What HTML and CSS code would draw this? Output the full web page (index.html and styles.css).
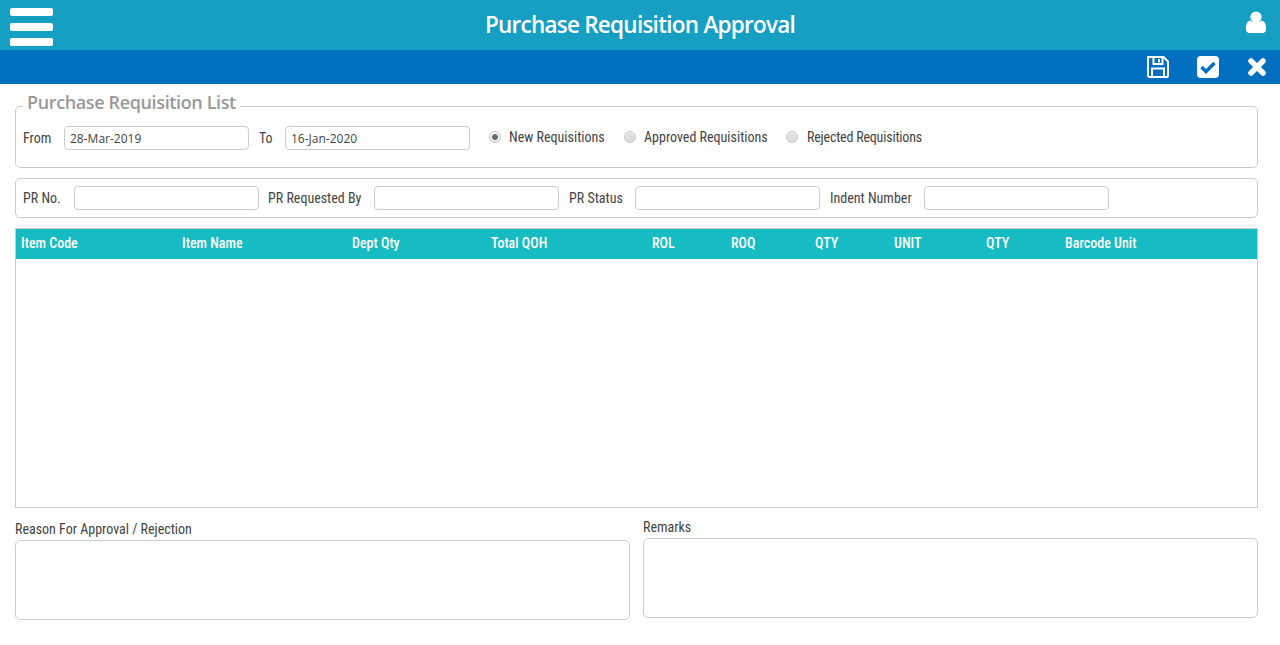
FILE: index.html
```html
<!DOCTYPE html>
<html lang="en">
<head>
    <meta charset="UTF-8">
    <meta name="viewport" content="width=device-width, initial-scale=1.0">
    <title>Purchase Requisition Approval</title>
    <link rel="stylesheet" href="styles.css">
</head>
<body>
    <header class="topbar">
        <div class="menu-btn"><span></span><span></span><span></span></div>
        <h1>Purchase Requisition Approval</h1>
        <svg class="user-icon" viewBox="0 0 20 22" width="20" height="22">
            <circle cx="10" cy="6" r="5.6" fill="#fff"/>
            <path d="M4.5 9.5C6 11.6 14 11.6 15.500 9.500C18 10 20 12 20 16.500V18.500C20 20.500 18.500 22 16.500 22H3.500C1.500 22 0 20.500 0 18.500V16.500C0 12 2 10 4.500 9.500Z" fill="#fff"/>
        </svg>
    </header>

    <div class="toolbar">
        <svg viewBox="0 0 22 22" width="22" height="22">
            <path d="M1 1H16.500L21 5.500V19.500C21 20.500 20.500 21 19.500 21H2.500C1.500 21 1 20.500 1 19.500Z" fill="none" stroke="#fff" stroke-width="2"/>
            <path d="M6.500 1.500V8H15.500V1.500M12 3V6.500M5 21V12.500H17V21" fill="none" stroke="#fff" stroke-width="2"/>
        </svg>
        <svg viewBox="0 0 22 22" width="22" height="22">
            <rect width="22" height="22" rx="4" fill="#fff"/>
            <path d="M4.500 11L9 15.500L17.500 7" fill="none" stroke="#006fbe" stroke-width="3.400"/>
        </svg>
        <svg class="close-icon" viewBox="0 0 18 18" width="18" height="18">
            <path d="M3 3L15 15M15 3L3 15" fill="none" stroke="#fff" stroke-width="5.500" stroke-linecap="round"/>
        </svg>
    </div>

    <main class="content">
        <!-- Date filter -->
        <fieldset class="box date-box">
            <legend>Purchase Requisition List</legend>
            <label class="lbl lbl-from">From</label>
            <input class="field" type="text" value="28-Mar-2019">
            <label class="lbl lbl-to">To</label>
            <input class="field" type="text" value="16-Jan-2020">
            <div class="radios">
                <label class="radio radio-new"><input type="radio" name="status" checked>New Requisitions</label>
                <label class="radio radio-approved"><input type="radio" name="status">Approved Requisitions</label>
                <label class="radio radio-rejected"><input type="radio" name="status">Rejected Requisitions</label>
            </div>
        </fieldset>

        <!-- Search -->
        <div class="box search-box">
            <label class="lbl lbl-prno">PR No.</label>
            <input class="field" type="text">
            <label class="lbl lbl-by">PR Requested By</label>
            <input class="field" type="text">
            <label class="lbl lbl-status">PR Status</label>
            <input class="field" type="text">
            <label class="lbl lbl-indent">Indent Number</label>
            <input class="field" type="text">
        </div>

        <!-- Item list -->
        <div class="items">
            <div class="items-head">
                <span>Item Code</span>
                <span>Item Name</span>
                <span>Dept Qty</span>
                <span>Total QOH</span>
                <span>ROL</span>
                <span>ROQ</span>
                <span>QTY</span>
                <span>UNIT</span>
                <span>QTY</span>
                <span>Barcode Unit</span>
            </div>
        </div>

        <div class="notes">
            <div class="note note-reason">
                <label class="lbl">Reason For Approval / Rejection</label>
                <textarea></textarea>
            </div>
            <div class="note">
                <label class="lbl">Remarks</label>
                <textarea></textarea>
            </div>
        </div>
    </main>
</body>
</html>
```
FILE: styles.css
```css
body { margin: 0; background: #fff; font-family: Roboto, "Liberation Sans", sans-serif; font-stretch: condensed; font-size: 14px; color: #444; }

.topbar { height: 50px; padding-bottom: 2px; box-sizing: border-box; background: #169fc3; display: flex; align-items: center; justify-content: center; position: relative; }
.topbar h1 { margin: 0; font-family: "Open Sans", sans-serif; font-stretch: normal; font-size: 22.5px; font-weight: 600; letter-spacing: -0.75px; color: #fff; }
.menu-btn { position: absolute; left: 10px; top: 8px; width: 43px; display: flex; flex-direction: column; gap: 7px; }
.menu-btn span { height: 8px; border-radius: 2px; background: #fff; }
.user-icon { position: absolute; right: 14px; top: 11px; }

.toolbar { height: 34px; background: #006fbe; display: flex; align-items: center; justify-content: flex-end; gap: 28px; padding-right: 14px; }
.close-icon { margin-left: 1px; }

.content { padding: 0 22px 0 15px; }

.box { border: 1px solid #ccc; border-radius: 5px; margin: 0; box-sizing: border-box; }
.lbl { white-space: nowrap; }
.field { width: 185px; height: 24px; box-sizing: border-box; border: 1px solid #ccc; border-radius: 4px; padding: 0 5px; font-family: "Open Sans", sans-serif; font-stretch: normal; font-size: 12px; color: #444; background: #fff; }

.date-box { height: 78px; margin-top: 6px; padding: 0 7px; display: flex; align-items: flex-start; min-width: 0; }
.date-box legend { margin-left: 0; padding: 0 4px 8px; font-family: "Open Sans", sans-serif; font-stretch: normal; font-size: 18px; font-weight: 600; line-height: 24px; letter-spacing: -0.37px; color: #999; }
.date-box .field { margin-top: 4px; }
.date-box .lbl-from { width: 41px; margin-top: 8px; }
.date-box .lbl-to { width: 26px; margin: 8px 0 0 10px; }

.radios { display: flex; margin: 7px 0 0 19px; }
.radio { display: flex; align-items: center; }
.radio-new { width: 135px; }
.radio-approved { width: 162px; }
.radio-rejected { letter-spacing: -0.2px; }
.radio input { appearance: none; width: 12px; height: 12px; margin: 0 8px 0 0; border: 1px solid #c4c4c4; border-radius: 50%; background: #dcdcdc; box-shadow: inset 0 1px 2px #fff; }
.radio input:checked { background: radial-gradient(circle, #666 0 2.500px, #e8e8e8 3.200px); }
.radio-rejected input { margin-right: 9px; }

.search-box { height: 40px; margin-top: 10px; padding: 0 7px; display: flex; align-items: center; }
.search-box .lbl-prno { width: 51px; }
.search-box .lbl-by { width: 106px; margin-left: 9px; }
.search-box .lbl-status { width: 66px; margin-left: 10px; }
.search-box .lbl-indent { width: 94px; margin-left: 10px; }

.items { height: 280px; margin-top: 10px; border: 1px solid #ccc; box-sizing: border-box; }
.items-head { height: 30px; padding: 0 0 2px 5px; box-sizing: border-box; background: #17bcc2; color: #fff; font-weight: 500; display: grid; grid-template-columns: 161px 170px 139px 161px 79px 84px 79px 92px 79px 1fr; align-items: center; }

.notes { display: grid; grid-template-columns: 615px 615px; column-gap: 13px; }
.note { padding-top: 9px; }
.note-reason { padding-top: 11px; }
.note .lbl { display: block; line-height: 20px; margin-bottom: 1px; }
.note textarea { display: block; width: 100%; height: 80px; box-sizing: border-box; border: 1px solid #ccc; border-radius: 5px; resize: none; margin: 0; background: #fff; }
```
